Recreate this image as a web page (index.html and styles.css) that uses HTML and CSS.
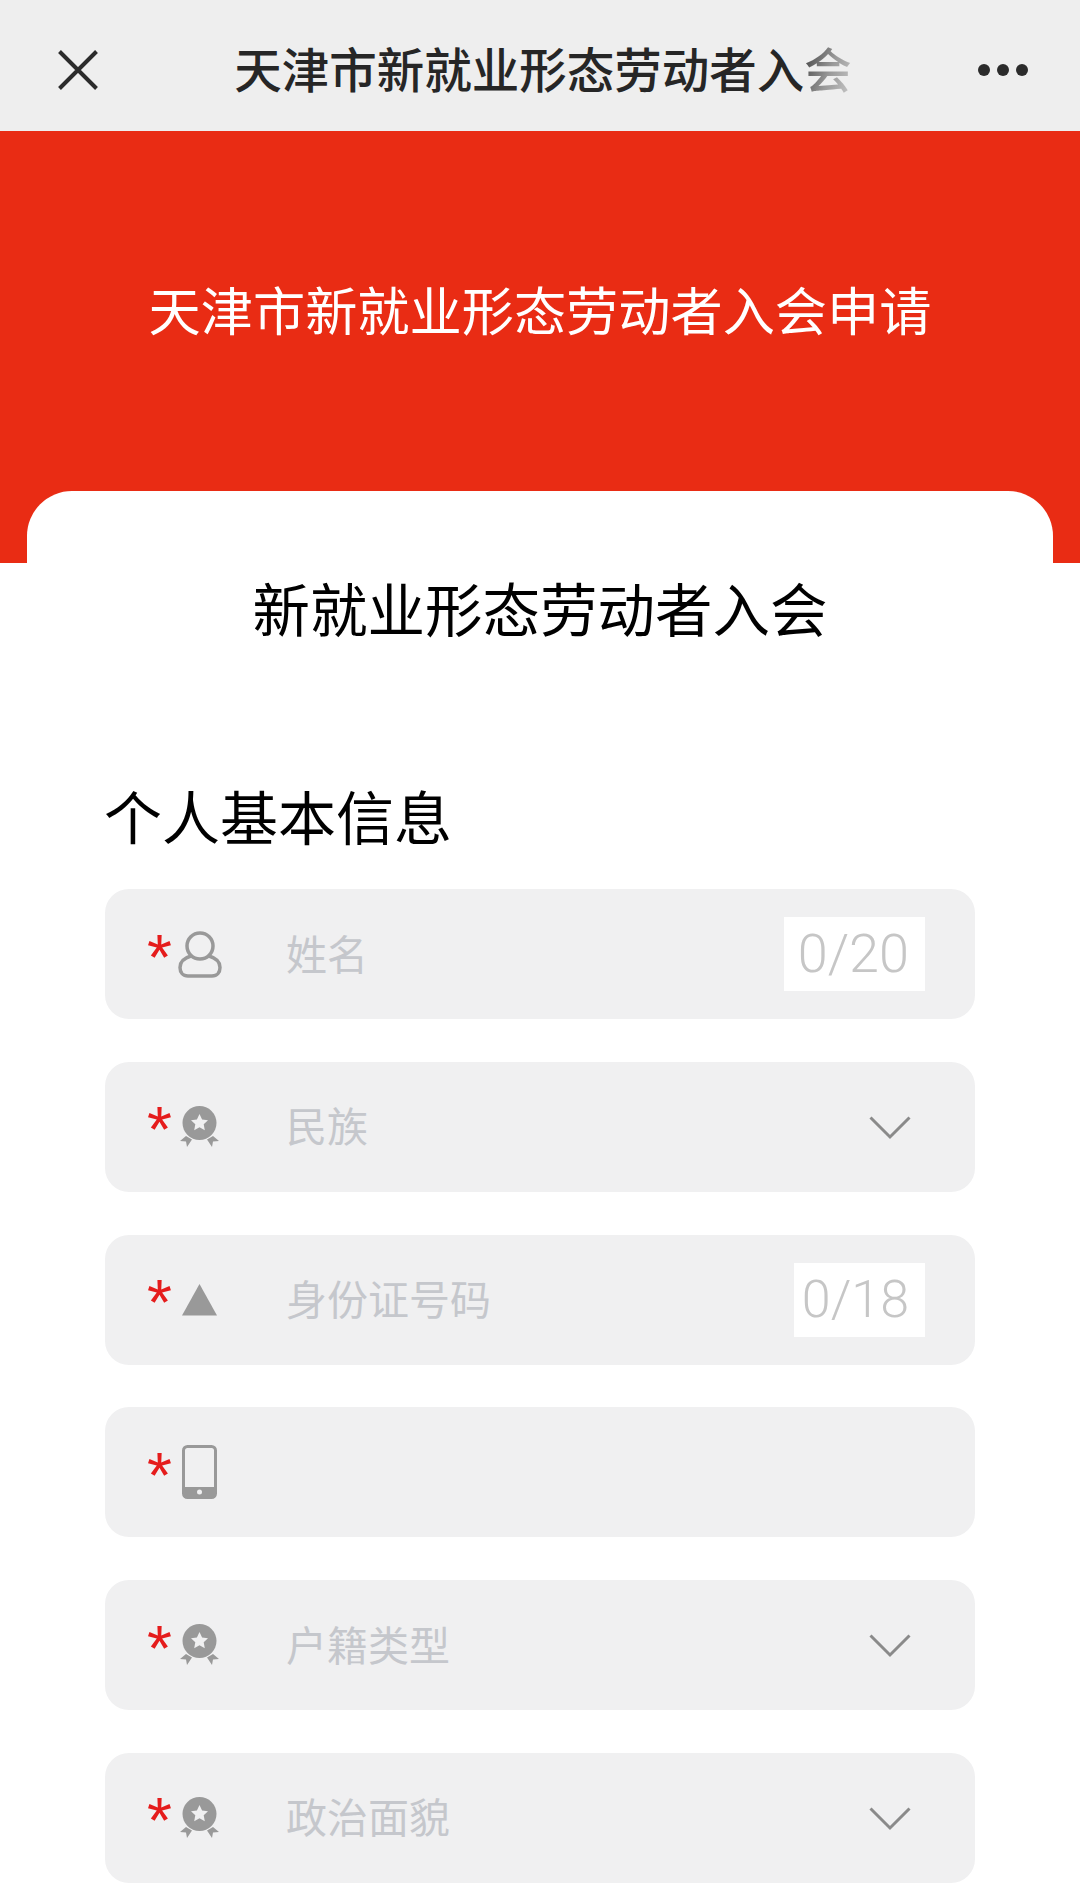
FILE: index.html
```html
<!DOCTYPE html>
<html lang="zh-CN">
<head>
<meta charset="utf-8">
<title>天津市新就业形态劳动者入会</title>
<link rel="stylesheet" href="styles.css">
</head>
<body>
<div class="page">
  <header class="nav">
    <svg class="nav-close" width="40" height="40" viewBox="0 0 40 40"><path d="M1.5 1.5L38.500 38.500M38.500 1.5L1.5 38.500" fill="none" stroke="#2b2b2b" stroke-width="4"/></svg>
    <div class="nav-title">天津市新就业形态劳动者入<span class="nav-fade">会</span></div>
    <div class="nav-more"><i></i><i></i><i></i></div>
  </header>
  <section class="hero">
    <h1 class="hero-title">天津市新就业形态劳动者入会申请</h1>
  </section>
  <main class="card">
    <h2 class="card-title">新就业形态劳动者入会</h2>
    <h3 class="section-title">个人基本信息</h3>
    <div class="fields">
      <div class="field">
        <span class="star">*</span>
        <svg class="icon" width="44" height="47" viewBox="0 0 44 47"><circle cx="22" cy="15" r="13" fill="none" stroke="#999" stroke-width="3.500"/><path d="M13 25C6 27 2 31 2 36.500c0 5 3 8.500 8 8.500h24c5 0 8-3.500 8-8.500 0-5.500-4-9.500-11-11.500" fill="none" stroke="#999" stroke-width="3.500"/></svg>
        <span class="label">姓名</span>
        <span class="count">0/20</span>
      </div>
      <div class="field">
        <span class="star">*</span>
        <svg class="icon" width="44" height="42" viewBox="0 0 44 42"><use href="#medal"/></svg>
        <span class="label">民族</span>
        <svg class="chev" width="42" height="24" viewBox="0 0 42 24"><path d="M1.500 1.500L21 21L40.500 1.500" fill="none" stroke="#8a8a8a" stroke-width="3"/></svg>
      </div>
      <div class="field">
        <span class="star">*</span>
        <svg class="icon" width="44" height="32" viewBox="0 0 44 32"><path d="M21.500 0L39 31.500H4Z" fill="#999"/></svg>
        <span class="label">身份证号码</span>
        <span class="count count-short">0/18</span>
      </div>
      <div class="field">
        <span class="star">*</span>
        <svg class="icon" width="44" height="54" viewBox="0 0 44 54"><rect x="5.500" y="1.500" width="32" height="51" rx="4" fill="none" stroke="#999" stroke-width="3"/><path d="M5.500 42H37.500V49a4 4 0 0 1-4 4H9.500a4 4 0 0 1-4-4Z" fill="#999"/><circle cx="21.500" cy="47" r="2.500" fill="#f0f0f1"/></svg>
      </div>
      <div class="field">
        <span class="star">*</span>
        <svg class="icon" width="44" height="42" viewBox="0 0 44 42"><use href="#medal"/></svg>
        <span class="label">户籍类型</span>
        <svg class="chev" width="42" height="24" viewBox="0 0 42 24"><path d="M1.500 1.500L21 21L40.500 1.500" fill="none" stroke="#8a8a8a" stroke-width="3"/></svg>
      </div>
      <div class="field">
        <span class="star">*</span>
        <svg class="icon" width="44" height="42" viewBox="0 0 44 42"><use href="#medal"/></svg>
        <span class="label">政治面貌</span>
        <svg class="chev" width="42" height="24" viewBox="0 0 42 24"><path d="M1.500 1.500L21 21L40.500 1.500" fill="none" stroke="#8a8a8a" stroke-width="3"/></svg>
      </div>
    </div>
  </main>
</div>
<svg class="defs" width="0" height="0">
  <defs>
    <g id="medal">
      <circle cx="21.500" cy="17" r="17" fill="#999"/>
      <path d="M21.500 8l2.600 5.400 5.900.8-4.300 4.100 1.100 5.900-5.300-2.900-5.300 2.900 1.100-5.900-4.300-4.100 5.900-.8Z" fill="#f0f0f1"/>
      <path d="M8 30L2 35l6 .5 1 5.500 5-7.500Z" fill="#999"/>
      <path d="M35 30l6 5-6 .5-1 5.500-5-7.500Z" fill="#999"/>
    </g>
  </defs>
</svg>
</body>
</html>
```
FILE: styles.css
```css
* { box-sizing: border-box; }
html, body { margin: 0; padding: 0; background: #fff; }
body { font-family: "Noto Sans CJK SC", "Liberation Sans", sans-serif; }
.page { width: 1080px; height: 1896px; overflow: hidden; }

.nav {
  height: 131px;
  padding: 9px 52px 0 58px;
  background: #eeeeee;
  display: grid;
  grid-template-columns: 1fr auto 1fr;
  align-items: center;
}
.nav-close { display: block; }
.nav-title { font-size: 47.500px; line-height: 64px; font-weight: 500; color: #262626; white-space: nowrap; margin-top: -5px; }
.nav-fade {
  background: linear-gradient(110deg, #333 0%, #999 55%, #ccc 100%);
  -webkit-background-clip: text;
  background-clip: text;
  color: transparent;
}
.nav-more { justify-self: end; display: flex; gap: 7px; }
.nav-more i { display: block; width: 12px; height: 12px; border-radius: 50%; background: #2b2b2b; }

.hero { height: 432px; background: #e92c14; padding-top: 141px; text-align: center; }
.hero-title { margin: 0; font-size: 52.200px; line-height: 72px; font-weight: 400; color: #fff; }

.card {
  margin: -72px 27px 0;
  padding: 76px 78px 0;
  background: #fff;
  border-radius: 45px 45px 0 0;
  position: relative;
}
.card-title { margin: 0; text-align: center; font-size: 57.500px; line-height: 80px; font-weight: 400; color: #000; }
.section-title { margin: 128px 0 0 -1px; font-size: 58px; line-height: 80px; font-weight: 400; color: #000; }

.fields { margin-top: 34px; display: flex; flex-direction: column; gap: 42.800px; }
.field {
  height: 130px;
  padding: 0 50px 0 42px;
  background: #f0f0f1;
  border-radius: 24px;
  display: flex;
  align-items: center;
}
.star {
  width: 31px;
  font-family: "Liberation Sans", sans-serif;
  font-size: 64px;
  line-height: 64px;
  height: 64px;
  color: #e51c1c;
  margin-top: 7px;
}
.icon { display: block; flex: none; }
.label { margin-left: 64px; margin-top: -5px; font-size: 41px; line-height: 56px; color: #c5c7cc; }
.count {
  margin-left: auto;
  width: 141px;
  height: 74px;
  padding-right: 16px;
  background: #fff;
  text-align: right;
  font-family: Roboto, "Liberation Sans", sans-serif;
  font-weight: 300;
  font-size: 54px;
  line-height: 74px;
  color: #c6c6c6;
}
.count-short { width: 131px; font-size: 52px; }
.chev { display: block; margin-left: auto; margin-right: 14px; margin-top: 2px; }
.defs { position: absolute; }
```
